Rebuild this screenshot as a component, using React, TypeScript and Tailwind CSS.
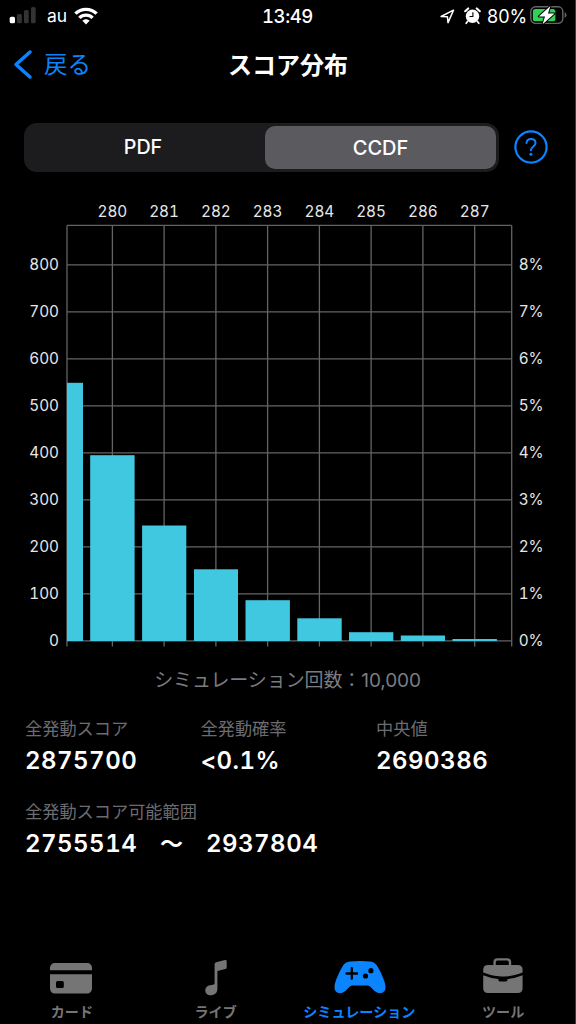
import type { ReactNode } from 'react';

type Tab = {
  label: string;
  icon: ReactNode;
  active?: boolean;
};

const COLUMNS = [
  { label: '280', x: 112.4 },
  { label: '281', x: 164.1 },
  { label: '282', x: 215.9 },
  { label: '283', x: 267.6 },
  { label: '284', x: 319.4 },
  { label: '285', x: 371.1 },
  { label: '286', x: 422.9 },
  { label: '287', x: 474.7 },
];

const BARS = [
  { x: 67, width: 16, top: 382.8 },
  { x: 90.2, width: 44.4, top: 455.2 },
  { x: 142.1, width: 44.2, top: 525.5 },
  { x: 194, width: 44, top: 569.3 },
  { x: 245.5, width: 44.4, top: 600.2 },
  { x: 297.3, width: 44.4, top: 618.3 },
  { x: 349, width: 44.3, top: 632.2 },
  { x: 400.8, width: 44.2, top: 635.5 },
  { x: 452.5, width: 44.4, top: 639 },
];

const LEFT = 67;
const RIGHT = 511.7;
const TOP = 225.4;
const BASELINE = 640.9;
const ROW = 47;

function StatusBar() {
  return (
    <div className="flex h-8 items-center pl-[9px] pr-[8px] text-[18px] text-white">
      <div className="flex w-[253px] items-center">
        <svg width="27" height="18" viewBox="0 0 27 18" className="mb-[2px] shrink-0">
          <rect x="0.7" y="10.7" width="5.3" height="6.6" rx="1.6" fill="#fff" />
          <rect x="7.9" y="7.9" width="5" height="9.4" rx="1.6" fill="#333" />
          <rect x="15" y="4" width="4.7" height="13.3" rx="1.6" fill="#333" />
          <rect x="22" y="0.9" width="4.7" height="16.4" rx="1.6" fill="#333" />
        </svg>
        <span className="ml-[11px] w-[20px] pt-px text-[17.5px]">au</span>
        <svg width="24" height="18" viewBox="0 0 24 18" className="mb-px ml-[7px] shrink-0">
          <g fill="none" stroke="#fff" strokeWidth="3.3">
            <path d="M1.4 6.7C7.2 0.8 16.8 0.8 22.6 6.7" />
            <path d="M5.4 10.8C9 7.1 15 7.1 18.6 10.8" />
          </g>
          <path d="M8.4 13.8C10.5 11.8 13.5 11.8 15.6 13.8L12 17.4Z" fill="#fff" />
        </svg>
      </div>
      <span className="w-[56px] pt-px text-[18.5px] font-medium tracking-[-0.4px] tabular-nums">13:49</span>
      <div className="ml-auto flex items-center">
        <svg width="15" height="15" viewBox="0 0 15 15" className="mr-[9px]">
          <path
            d="M1.1 7.5L13.5 1.2L8 13.6L7.4 7.7Z"
            fill="none"
            stroke="#fff"
            strokeWidth="1.5"
            strokeLinejoin="round"
          />
        </svg>
        <svg width="17" height="18" viewBox="0 0 17 18" className="mb-px mr-[6px]">
          <circle cx="8.5" cy="9.2" r="6.7" fill="#fff" />
          <path d="M1.2 4.2L4.2 1.4M12.8 1.4L15.8 4.2" stroke="#fff" strokeWidth="2.1" strokeLinecap="round" />
          <path d="M3.5 14.5L2.2 16.3M13.5 14.5L14.8 16.3" stroke="#fff" strokeWidth="1.7" strokeLinecap="round" />
          <path d="M8.9 5.2V9.5H5.5" fill="none" stroke="#000" strokeWidth="1.1" />
        </svg>
        <span className="w-[39px]">80%</span>
        <svg width="37" height="20" viewBox="0 0 37 20" className="mb-[2px] ml-[4px]">
          <rect x="0.8" y="1.8" width="32" height="16.6" rx="4.8" fill="none" stroke="#666" strokeWidth="1.4" />
          <path d="M34.6 7.3C37.1 8.2 37.1 12 34.6 12.9Z" fill="#666" />
          <rect x="2.9" y="4" width="22.5" height="12.3" rx="2.6" fill="#30d158" />
          <path
            d="M20.4 0.9L8.8 11.4H15L12.6 19.2L24.6 8.4H18Z"
            fill="#fff"
            stroke="#000"
            strokeWidth="2"
            strokeLinejoin="round"
            paintOrder="stroke"
          />
        </svg>
      </div>
    </div>
  );
}

function NavBar() {
  return (
    <header className="flex h-[66px] items-center">
      <button type="button" className="flex w-[228px] items-center pl-[13px] text-[23.5px] text-[#0a84ff]">
        <svg width="20" height="31" viewBox="0 0 20 31" className="mb-[2px] mr-[11px]">
          <path
            d="M17 3L3 15.5L17 28"
            fill="none"
            stroke="currentColor"
            strokeWidth="3.5"
            strokeLinecap="round"
            strokeLinejoin="round"
          />
        </svg>
        戻る
      </button>
      <h1 className="pt-px text-[24px] font-bold text-white">スコア分布</h1>
    </header>
  );
}

function Segments() {
  return (
    <div className="mt-[25px] flex items-center pl-[24px]">
      <div className="flex h-[49px] w-[475px] rounded-[13px] bg-[#1c1c1e] p-[3px] text-[20px] font-medium text-white">
        <button type="button" className="w-[238px] pr-[6px] text-[19.7px]">
          PDF
        </button>
        <button type="button" className="w-[231px] rounded-[10px] bg-[#5b5a5f]">
          CCDF
        </button>
      </div>
      <svg width="34" height="34" viewBox="0 0 34 34" className="mb-[2px] ml-[15px]">
        <circle cx="17" cy="17" r="15.6" fill="none" stroke="#0a84ff" strokeWidth="2.2" />
        <path
          d="M12.5 13C12.7 10.5 14.5 9.1 17 9.1C19.6 9.1 21.5 10.7 21.5 13C21.5 16.4 16.9 16.6 16.9 20.2"
          fill="none"
          stroke="#0a84ff"
          strokeWidth="2"
          strokeLinecap="round"
        />
        <circle cx="16.9" cy="24.2" r="1.5" fill="#0a84ff" />
      </svg>
    </div>
  );
}

function Chart() {
  const rows = Array.from({ length: 9 }, (_, i) => i);
  return (
    <svg width="576" height="460" viewBox="0 195 576 460" className="mt-[23px] block">
      <g stroke="#646464" strokeWidth="1.3">
        {rows.map((n) => (
          <line key={n} x1={LEFT} x2={RIGHT} y1={BASELINE - n * ROW} y2={BASELINE - n * ROW} />
        ))}
        <line x1={LEFT} x2={RIGHT} y1={TOP} y2={TOP} />
        <line x1={LEFT} x2={LEFT} y1={TOP} y2="646.5" />
        <line x1={RIGHT} x2={RIGHT} y1={TOP} y2="646.5" />
        {COLUMNS.map((c) => (
          <line key={c.label} x1={c.x} x2={c.x} y1={TOP} y2="646.5" />
        ))}
      </g>
      <g fill="#40c8e0">
        {BARS.map((b) => (
          <rect key={b.x} x={b.x} y={b.top} width={b.width} height={641 - b.top} />
        ))}
      </g>
      <g fill="#e6e6e6" fontSize="15.3" className="tabular-nums">
        {COLUMNS.map((c) => (
          <text key={c.label} x={c.x} y="216.8" textAnchor="middle">
            {c.label}
          </text>
        ))}
        {rows.map((n) => (
          <g key={n}>
            <text x="59" y={646 - n * ROW} textAnchor="end">
              {n * 100}
            </text>
            <text x="518.7" y={646 - n * ROW} letterSpacing="-0.2">
              {n}%
            </text>
          </g>
        ))}
      </g>
    </svg>
  );
}

function Stat({ label, value }: { label: string; value: string }) {
  return (
    <div className="w-[175.5px]">
      <dt className="text-[17.2px] leading-[26px] text-[#6c6c70]">{label}</dt>
      <dd className="text-[24px] font-semibold leading-[38px] tracking-[0.5px] text-white tabular-nums">{value}</dd>
    </div>
  );
}

const TABS: Tab[] = [
  {
    label: 'カード',
    icon: (
      <svg width="44" height="34" viewBox="0 0 44 34" className="mr-px">
        <path d="M1 9.3V7.3C1 4 3 2 6.3 2H37.7C41 2 43 4 43 7.3V9.3Z" fill="currentColor" />
        <path
          fillRule="evenodd"
          d="M1 13.2H43V27C43 30.5 41 32.5 37.7 32.5H6.3C3 32.5 1 30.5 1 27ZM8.6 20Q7 20 7 21.6V25.4Q7 27 8.6 27H13.2Q14.8 27 14.8 25.4V21.6Q14.8 20 13.2 20Z"
          fill="currentColor"
        />
      </svg>
    ),
  },
  {
    label: 'ライブ',
    icon: (
      <svg width="24" height="37" viewBox="0 0 24 37">
        <path
          d="M10.6 5.2Q10.6 3.6 12.2 3.2L21 1.1Q22.7 0.7 22.7 2.3V8.4Q22.7 9.7 21.4 10L13.4 11.9V30C13.4 33.8 10.7 36.3 6.7 36.3C3.5 36.3 1.3 34.4 1.3 31.5C1.3 28.3 3.6 26.3 7.3 26C9.6 25.8 10.6 25.8 10.6 23.8Z"
          fill="currentColor"
        />
      </svg>
    ),
  },
  {
    label: 'シミュレーション',
    active: true,
    icon: (
      <svg width="52" height="34" viewBox="0 0 52 34" className="mb-px ml-px">
        <path
          d="M16 1.5C22 0.7 30 0.7 36 1.5C40 2 42 3.8 43.8 7C47 12.8 51.5 22 51.5 27C51.5 31 49.3 33.2 45.8 33.2C42.8 33.2 40.6 31.2 38.4 28.8C36.7 26.9 35.6 25.4 33.4 25.4H18.6C16.4 25.4 15.3 26.9 13.6 28.8C11.4 31.2 9.2 33.2 6.2 33.2C2.7 33.2 0.5 31 0.5 27C0.5 22 5 12.8 8.2 7C10 3.8 12 2 16 1.5Z"
          fill="currentColor"
        />
        <path d="M17.8 8.2V18.8M12.5 13.5H23.1" stroke="#000" strokeWidth="2.3" strokeLinecap="round" />
        <circle cx="36.9" cy="10.7" r="2.6" fill="#000" />
        <circle cx="31.5" cy="16" r="2.6" fill="#000" />
      </svg>
    ),
  },
  {
    label: 'ツール',
    icon: (
      <svg width="42" height="37" viewBox="0 0 42 37" className="mb-[4px]">
        <path
          d="M12.6 9V5.2Q12.6 2.4 15.4 2.4H25.2Q28 2.4 28 5.2V9"
          fill="none"
          stroke="currentColor"
          strokeWidth="2.4"
        />
        <path
          d="M1.2 15.6V12.8Q1.2 8 6 8H35.8Q40.6 8 40.6 12.8V15.6C32 18.7 26 19.6 20.9 19.6S9.8 18.7 1.2 15.6Z"
          fill="currentColor"
        />
        <path
          d="M1.2 18.2Q9 21.4 16.3 22V22.8Q16.3 24.4 17.9 24.4H23.9Q25.5 24.4 25.5 22.8V22Q32.8 21.4 40.6 18.2V31.2Q40.6 36 35.8 36H6Q1.2 36 1.2 31.2Z"
          fill="currentColor"
        />
      </svg>
    ),
  },
];

function TabBar() {
  return (
    <nav className="flex h-[70px]">
      {TABS.map((tab) => (
        <button
          key={tab.label}
          type="button"
          className={`flex flex-1 flex-col items-center text-[14.1px] font-bold ${
            tab.active ? 'text-[#0a84ff]' : 'text-[#757575]'
          }`}
        >
          <span className="flex h-[47px] items-center">{tab.icon}</span>
          <span className="pt-px leading-[20px]">{tab.label}</span>
        </button>
      ))}
    </nav>
  );
}

export default function App() {
  return (
    <div className="flex h-[1024px] w-[576px] flex-col overflow-hidden border-r border-[#3a3a3a] bg-black font-['Inter','Noto_Sans_CJK_JP',sans-serif]">
      <StatusBar />
      <NavBar />
      <Segments />
      <Chart />
      <p className="mt-[12px] text-center text-[19px] leading-[28px] tracking-[-0.1px] text-[#7c7c80]">
        シミュレーション回数：10,000
      </p>
      <dl className="mt-[21px] flex flex-wrap gap-y-[19px] pl-[25px]">
        <Stat label="全発動スコア" value="2875700" />
        <Stat label="全発動確率" value="<0.1%" />
        <Stat label="中央値" value="2690386" />
        <div className="w-full">
          <dt className="text-[17.2px] leading-[26px] text-[#6c6c70]">全発動スコア可能範囲</dt>
          <dd className="flex text-[24px] font-semibold leading-[38px] tracking-[0.5px] text-white tabular-nums">
            <span className="w-[135px]">2755514</span>
            <span className="w-[46px] text-[23px]">〜</span>
            <span>2937804</span>
          </dd>
        </div>
      </dl>
      <div className="mt-auto">
        <TabBar />
      </div>
    </div>
  );
}
